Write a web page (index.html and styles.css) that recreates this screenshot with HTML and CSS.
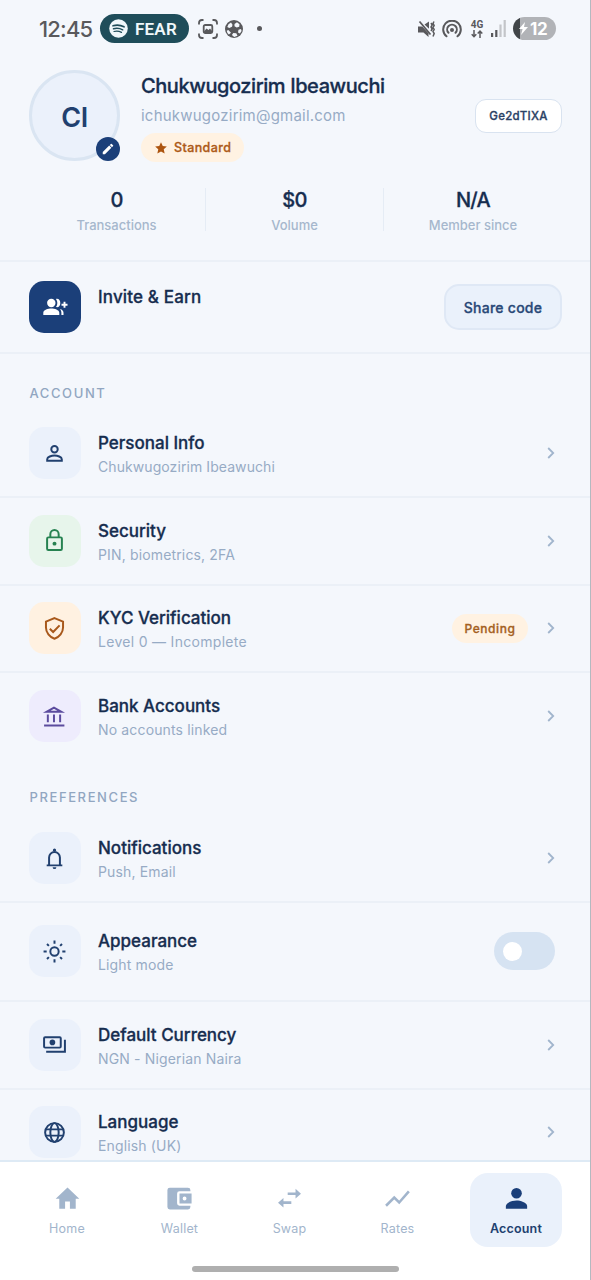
FILE: index.html
```html
<!DOCTYPE html>
<html lang="en">
<head>
<meta charset="utf-8">
<title>Account</title>
<link rel="stylesheet" href="styles.css">
</head>
<body>
<div class="phone">
  <header class="status">
    <span class="clock">12:45</span>
    <span class="now-playing">
      <svg width="19" height="19" viewBox="0 0 19 19"><circle cx="9.5" cy="9.5" r="9.3" fill="#f0f8fb"/><g fill="none" stroke="#1f4d5a" stroke-linecap="round"><path d="M4 6.800c3.600-1 7.600-.7 11 1" stroke-width="1.700"/><path d="M4.500 9.800c3.200-.8 6.300-.5 9.200 1" stroke-width="1.500"/><path d="M5 12.500c2.600-.6 5.100-.4 7.500.9" stroke-width="1.200"/></g></svg>
      <span>FEAR</span>
    </span>
    <svg class="s-shot" width="20" height="20" viewBox="0 0 20 20"><g fill="none" stroke="#59595c" stroke-width="1.800"><path d="M1 5.500V4Q1 1 4 1H5.500M14.500 1H16Q19 1 19 4V5.500M19 14.500V16Q19 19 16 19H14.500M5.500 19H4Q1 19 1 16V14.500"/><rect x="5.700" y="6" width="8.600" height="8" rx="1.500"/></g><path d="M6 12.500l2.500-3 2 1.500 1.500-1.500 2 2.500v2H6z" fill="#59595c"/></svg>
    <svg class="s-ball" width="18" height="18" viewBox="0 0 18 18"><circle cx="9" cy="9" r="9" fill="#59595c"/><path d="M9.500 4l2.500-1.800 2.500 2-.3 2.600-2.500.6L9.500 6.200zM3.500 4.300L6 2.500l1.500 2.200-.5 2-2.700 1.300-2-1zM6 12.700l-2.700-2.600-1.600.7c.3 1.800 1.100 3 2.200 3.800zM8.300 13l3 .3 1.200 2.400-3.300 1.300-2.300-2zM13.500 9.800l2.500-.8.6 2.100-1.700 2.500-1.900-1.200z" fill="#f4f7fc"/></svg>
    <span class="s-dot"></span>
    <span class="spacer"></span>
    <svg class="s-mute" width="17" height="18" viewBox="0 0 17 18"><path d="M0 6.500h3.500l1 .2 6 6.500V17l-5-4.500H0zM6.500 4.500L11 1.500v7.200z" fill="#59595c"/><path d="M1.500 1.500l11 13" stroke="#59595c" stroke-width="1.800"/><path d="M13 3l1.200 2L13 7l1.200 2L13 11M16 1.500L15 3.500l1.200 2L15 7.500l1.200 2L15 11.500l1.200 2L15 16.500" fill="none" stroke="#59595c" stroke-width="1.500"/></svg>
    <svg class="s-cast" width="20" height="18" viewBox="0 0 20 18"><g fill="none" stroke="#59595c" stroke-width="2" stroke-linecap="round"><path d="M4.500 16.300A8.800 8.800 0 1 1 15.500 16.300"/><path d="M6.500 12.800A4.800 4.800 0 1 1 13.500 12.800"/></g><circle cx="10" cy="10" r="2" fill="#59595c"/></svg>
    <span class="net"><span>4G</span><svg width="12" height="8" viewBox="0 0 12 8"><path d="M3 0v6.500M.7 4.300L3 6.700l2.300-2.400M9 8V1.200M6.700 3.600L9 1.200l2.300 2.400" fill="none" stroke="#59595c" stroke-width="1.500"/></svg></span>
    <svg class="s-signal" width="15" height="17" viewBox="0 0 15 17"><path d="M0 13h2.200v4H0zM4.200 10h2.200v7H4.200z" fill="#59595c"/><path d="M8.400 4.500h2.200V17H8.400zM12.600 0h2.200v17h-2.200z" fill="#c3c5c9"/></svg>
    <span class="battery"><svg width="9" height="13" viewBox="0 0 9 13"><path d="M6 0L0 7h3.600L2 13l7-8H5z" fill="#fff"/></svg><span>12</span></span>
  </header>

  <main class="content">
    <section class="profile">
      <div class="avatar">CI
        <span class="edit"><svg width="14" height="14" viewBox="0 0 24 24"><path d="M3 17.250V21h3.750L17.800 9.900l-3.700-3.700zM20.700 7a1 1 0 0 0 0-1.400l-2.300-2.300a1 1 0 0 0-1.400 0l-1.900 1.900 3.700 3.700z" fill="#fff"/></svg></span>
      </div>
      <div class="identity">
        <h1 class="name">Chukwugozirim Ibeawuchi</h1>
        <p class="email">ichukwugozirim@gmail.com</p>
        <span class="tier"><svg width="12" height="12" viewBox="0 0 24 24"><path d="M12 .5l3.500 7.700 8.200.9-6.200 5.600 1.800 8.300L12 18.800 4.700 23l1.800-8.300L.3 9.100l8.200-.9z" fill="#ad5510"/></svg><span>Standard</span></span>
      </div>
      <span class="code">Ge2dTIXA</span>
    </section>

    <section class="stats">
      <div class="stat"><b class="stat-value">0</b><span class="stat-label">Transactions</span></div>
      <div class="stat"><b class="stat-value">$0</b><span class="stat-label">Volume</span></div>
      <div class="stat"><b class="stat-value">N/A</b><span class="stat-label">Member since</span></div>
    </section>

    <section class="invite">
      <span class="tile navy"><svg width="26" height="26" viewBox="0 0 26 26"><g fill="#fff"><circle cx="9.300" cy="9" r="4.200"/><path d="M1.300 21v-2.300c0-2.800 4.800-4.200 8-4.200s8 1.400 8 4.200V21zM14 4.900c2.600-.7 4.300 1.400 4.300 4.100s-1.700 4.800-4.300 4.100c1.800-2.300 1.800-5.900 0-8.200zM17.800 15c2.600.6 3.700 1.900 3.700 3.800V21h-2.100v-2.300c0-1.500-.5-2.700-1.600-3.700z"/></g><path d="M22.500 7.700v6M19.500 10.700h6" stroke="#fff" stroke-width="1.900"/></svg></span>
      <h2 class="title">Invite &amp; Earn</h2>
      <span class="share">Share code</span>
    </section>

    <h3 class="group">ACCOUNT</h3>
    <section class="list">
      <div class="row">
        <span class="tile"><svg class="ico" viewBox="0 0 24 24"><circle cx="12" cy="7.900" r="3.100"/><path d="M5 17.500c0-2.300 4.200-3.500 7-3.500s7 1.200 7 3.500V19H5z"/></svg></span>
        <div class="text"><h2 class="title">Personal Info</h2><p class="sub long">Chukwugozirim Ibeawuchi</p></div>
        <svg class="chev" viewBox="0 0 8 12"><path d="M1.200 1l5 5-5 5"/></svg>
      </div>
      <div class="row">
        <span class="tile green"><svg class="ico" viewBox="0 0 24 24"><rect x="4.900" y="9" width="14.200" height="12.200" rx="1.200"/><path d="M8 9V6a4 4 0 0 1 8 0v3"/><circle class="solid" cx="12" cy="15" r="1.900"/></svg></span>
        <div class="text"><h2 class="title">Security</h2><p class="sub">PIN, biometrics, 2FA</p></div>
        <svg class="chev" viewBox="0 0 8 12"><path d="M1.200 1l5 5-5 5"/></svg>
      </div>
      <div class="row">
        <span class="tile orange"><svg class="ico" viewBox="0 0 24 24"><path d="M12 2l8.200 3.400V11c0 4.800-3.500 9.300-8.200 10.800C7.300 20.300 3.800 15.800 3.800 11V5.400z"/><path d="M7.500 12.200l3.200 3.200 6.200-6.400"/></svg></span>
        <div class="text"><h2 class="title">KYC Verification</h2><p class="sub wide">Level 0 — Incomplete</p></div>
        <span class="pending">Pending</span>
        <svg class="chev" viewBox="0 0 8 12"><path d="M1.200 1l5 5-5 5"/></svg>
      </div>
      <div class="row last">
        <span class="tile purple"><svg class="ico" viewBox="0 0 24 24"><path d="M4.500 7.500h14L11.500 3.600z"/><path d="M5.600 10v7.500M11.500 10v7.500M17.400 10v7.500M2 20.700h19.500"/></svg></span>
        <div class="text"><h2 class="title">Bank Accounts</h2><p class="sub">No accounts linked</p></div>
        <svg class="chev" viewBox="0 0 8 12"><path d="M1.200 1l5 5-5 5"/></svg>
      </div>
    </section>

    <h3 class="group prefs">PREFERENCES</h3>
    <section class="list">
      <div class="row">
        <span class="tile"><svg class="ico" viewBox="0 0 24 24"><path d="M4.500 18.600h15M6.800 18.500V11a5.200 5.200 0 0 1 10.400 0v7.500"/><path class="solid" d="M10.500 5V3.800a1.500 1.500 0 0 1 3 0V5zM10.200 20.300h3.600a1.800 1.800 0 0 1-3.600 0z"/></svg></span>
        <div class="text"><h2 class="title">Notifications</h2><p class="sub">Push, Email</p></div>
        <svg class="chev" viewBox="0 0 8 12"><path d="M1.200 1l5 5-5 5"/></svg>
      </div>
      <div class="row tall">
        <span class="tile"><svg class="ico" viewBox="0 0 24 24"><circle cx="12" cy="12" r="4"/><path d="M12 1.500v3M12 19.500v3M1.500 12h3M19.500 12h3M4.800 4.800l1.800 1.800M17.400 17.400l1.800 1.800M4.800 19.200l1.800-1.800M17.400 6.600l1.800-1.800"/></svg></span>
        <div class="text"><h2 class="title">Appearance</h2><p class="sub">Light mode</p></div>
        <span class="toggle"><span class="knob"></span></span>
      </div>
      <div class="row">
        <span class="tile"><svg class="ico" viewBox="0 0 24 24"><rect x="2" y="5" width="16" height="10" rx="1"/><circle class="solid" cx="10" cy="10" r="2.700"/><path d="M22 7.500V19H4"/></svg></span>
        <div class="text"><h2 class="title">Default Currency</h2><p class="sub">NGN - Nigerian Naira</p></div>
        <svg class="chev" viewBox="0 0 8 12"><path d="M1.200 1l5 5-5 5"/></svg>
      </div>
      <div class="row last">
        <span class="tile"><svg class="ico" viewBox="0 0 24 24"><circle cx="12" cy="12" r="9"/><ellipse cx="12" cy="12" rx="4" ry="9"/><path d="M3.800 9h16.400M3.800 15h16.400"/></svg></span>
        <div class="text"><h2 class="title">Language</h2><p class="sub">English (UK)</p></div>
        <svg class="chev" viewBox="0 0 8 12"><path d="M1.200 1l5 5-5 5"/></svg>
      </div>
    </section>
  </main>

  <nav class="tabs">
    <div class="tab"><svg width="29" height="29" viewBox="0 0 24 24"><path d="M10 20.500v-6h4v6h4.800v-8.200h3L12 2.900 2.200 12.300h3v8.200z" fill="#a2b5cc"/></svg><span>Home</span></div>
    <div class="tab"><svg width="29" height="29" viewBox="0 0 24 24"><g fill="#a2b5cc"><path d="M21 18v1a2 2 0 0 1-2 2H4a2 2 0 0 1-2-2V5a2 2 0 0 1 2-2h15a2 2 0 0 1 2 2v1h-9a2 2 0 0 0-2 2v8a2 2 0 0 0 2 2z"/><path fill-rule="evenodd" d="M12 16.200h10V7.800H12zm4.200-2.600a1.600 1.600 0 1 1 0-3.200 1.600 1.600 0 0 1 0 3.200z"/></g></svg><span>Wallet</span></div>
    <div class="tab"><svg width="29" height="29" viewBox="0 0 24 24"><path d="M7 11.500L2.500 15.500 7 19.500v-3h6.500v-2.200H7zM21.500 8L17 4v3h-6.500v2.200H17V12z" fill="#a2b5cc"/></svg><span>Swap</span></div>
    <div class="tab"><svg width="29" height="29" viewBox="0 0 24 24"><path d="M2.500 18l6.800-6.800 4.100 4.100 8-9.200" fill="none" stroke="#a2b5cc" stroke-width="2.100"/></svg><span>Rates</span></div>
    <div class="tab active"><svg width="29" height="29" viewBox="0 0 24 24"><g fill="#1b3f79"><circle cx="12" cy="7.700" r="4.400"/><path d="M3.200 20.500v-2.200c0-3 5.800-4.600 8.800-4.600s8.800 1.600 8.800 4.600v2.200z"/></g></svg><span>Account</span></div>
    <i class="handle"></i>
  </nav>
</div>
</body>
</html>
```
FILE: styles.css
```css
* { box-sizing: border-box; margin: 0; padding: 0; }
body { font-family: Inter, "Open Sans", sans-serif; background: #f4f7fc; color: #162d4f; }
svg { display: block; flex: none; }
.phone { width: 591px; height: 1280px; overflow: hidden; background: #f4f7fc; border-right: 1px solid #b4b9c0; display: flex; flex-direction: column; }

.status { flex: none; height: 57px; padding-left: 39px; padding-right: 34px; display: flex; align-items: center; color: #59595c; }
.clock { width: 61px; font-size: 22px; font-weight: 500; letter-spacing: -.8px; white-space: nowrap; }
.now-playing { width: 89px; height: 29px; border-radius: 15px; background: #1f4d5a; color: #f0f8fb; display: flex; align-items: center; padding-left: 9px; gap: 7px; font: 600 17px Roboto, sans-serif; letter-spacing: .2px; }
.s-shot { margin-left: 9px; }
.s-ball { margin-left: 7px; }
.s-dot { width: 5px; height: 5px; border-radius: 50%; background: #59595c; margin-left: 14px; }
.spacer { flex: 1; }
.s-cast { margin-left: 7px; }
.net { margin-left: 8px; width: 14px; display: flex; flex-direction: column; align-items: center; font: 700 10px/9px Roboto, sans-serif; gap: 1px; }
.s-signal { margin-left: 7px; }
.battery { margin-left: 7px; width: 43px; height: 23px; border-radius: 12px; background: linear-gradient(90deg, #414549 7px, #b1b3b7 7px); color: #fff; display: flex; align-items: center; padding-left: 6px; gap: 2px; font-size: 17px; font-weight: 700; letter-spacing: -.3px; }

.content { flex: none; height: 1103px; overflow: hidden; }
.profile { height: 118px; padding: 13px 28px 0 29px; display: flex; }
.avatar { position: relative; flex: none; width: 91px; height: 91px; border: 3px solid #dae5f2; border-radius: 50%; background: #ebf1fb; display: flex; align-items: center; justify-content: center; font-size: 27px; font-weight: 600; color: #21406f; letter-spacing: -.5px; padding-top: 3px; }
.edit { position: absolute; right: -3px; bottom: -3px; width: 24px; height: 24px; border-radius: 50%; background: #1b3f79; display: flex; align-items: center; justify-content: center; }
.identity { margin-left: 21px; flex: 1; display: flex; flex-direction: column; align-items: flex-start; white-space: nowrap; }
.name, .title, .stat-value, .tier, .code, .share, .pending { -webkit-text-stroke: .3px currentColor; }
.name { font-size: 20px; line-height: 26px; margin-top: 3px; font-weight: 500; letter-spacing: -.42px; }
.email { font-size: 15px; line-height: 20px; margin-top: 7px; letter-spacing: .22px; color: #97abc5; }
.tier { margin-top: 7px; height: 29px; border-radius: 15px; background: #fff2e2; color: #ad5a18; display: flex; align-items: center; gap: 7px; padding: 0 13px 0 14px; font-size: 12.500px; font-weight: 500; letter-spacing: .4px; }
.code { flex: none; margin-top: 29px; width: 87px; height: 34px; border: 1px solid #d9e3f0; border-radius: 11px; background: #fff; display: flex; align-items: center; justify-content: center; font-size: 11.500px; font-weight: 500; letter-spacing: .25px; color: #2b4265; }

.stats { height: 87px; padding: 13px 28px 0 28px; display: grid; grid-template-columns: 178px 178px 178px; border-bottom: 2px solid #ebf0f7; }
.stat { height: 43px; display: flex; flex-direction: column; align-items: center; border-right: 1px solid #e5ecf5; }
.stat:last-child { border: 0; }
.stat-value { font-size: 20px; line-height: 24px; font-weight: 500; letter-spacing: -.7px; }
.stat-label { font-size: 13px; line-height: 16px; margin-top: 5px; font-weight: 500; color: #a6b7cd; }

.invite { height: 92px; padding: 0 28px 0 28.500px; display: flex; align-items: center; border-bottom: 2px solid #ebf0f7; }
.invite .title { flex: 1; margin: -20px 0 0 17.500px; letter-spacing: .15px; }
.title { font-size: 17px; line-height: 22px; font-weight: 500; letter-spacing: 0; white-space: nowrap; }
.share { width: 118px; height: 46px; border: 2px solid #dfe8f5; border-radius: 15px; background: #eaf1fb; display: flex; align-items: center; justify-content: center; font-size: 14px; font-weight: 500; letter-spacing: .25px; color: #294877; }
.group { height: 56.500px; padding: 31px 0 0 29.500px; font-size: 13px; line-height: 17px; font-weight: 500; letter-spacing: 1.600px; color: #91a6c1; }
.prefs { height: 54.500px; padding-top: 28.500px; }
.tile { flex: none; width: 52px; height: 52px; border-radius: 15px; background: #ebf1fb; color: #21406f; display: flex; align-items: center; justify-content: center; }
.navy { background: #1b3f79; }
.green { background: #e7f5eb; color: #268251; }
.orange { background: #fff1e1; color: #a8581b; }
.purple { background: #eeecfd; color: #5b4b9e; }
.ico { width: 25px; height: 25px; fill: none; stroke: currentColor; stroke-width: 1.900; }
.ico .solid { fill: currentColor; stroke: none; }
.row { height: 87.600px; padding: 0 35px 0 28.500px; display: flex; align-items: center; border-bottom: 2px solid #ebf0f7; }
.row.last { border-bottom-color: transparent; }
.row.tall { height: 99px; }
.text { flex: 1; margin: 3px 0 0 17.500px; white-space: nowrap; }
.sub { font-size: 14px; line-height: 20px; margin-top: 3px; letter-spacing: .15px; color: #97abc5; }
.sub.long { letter-spacing: .08px; }
.sub.wide { letter-spacing: .3px; }
.chev { width: 8px; height: 12px; fill: none; stroke: #a1b5cd; stroke-width: 1.800; }
.pending { width: 76px; height: 29px; border-radius: 15px; background: #fff2e2; color: #a4601f; display: flex; align-items: center; justify-content: center; font-size: 12px; font-weight: 500; letter-spacing: .55px; margin-right: 19px; }
.toggle { width: 61px; height: 38px; border-radius: 19px; background: #d6e3f2; display: flex; align-items: center; padding-left: 9px; }
.knob { width: 19px; height: 19px; border-radius: 50%; background: #fff; }

.tabs { position: relative; flex: 1; background: #fff; border-top: 2px solid #deeaf5; padding: 11px 28px 0 29px; display: grid; grid-template-columns: 76px 149px 71px 145px 92px; align-items: start; }
.tab { height: 74px; border-radius: 18px; padding-top: 11px; display: flex; flex-direction: column; align-items: center; font-size: 12.500px; line-height: 16px; letter-spacing: .2px; color: #a2b5cc; }
.tab span { margin-top: 8px; }
.active { background: #eaf1fb; color: #21406f; font-weight: 600; }
.handle { position: absolute; left: 192px; bottom: 8px; width: 207px; height: 6px; border-radius: 3px; background: #afafaf; }
```
